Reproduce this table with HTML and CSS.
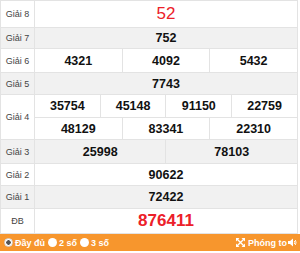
FILE: index.html
```html
<!DOCTYPE html>
<html>
	<head>
		<meta charset="UTF-8">
		<title>Kết quả xổ số</title>
		<link rel="stylesheet" href="styles.css">
	</head>
	<body>
		<div class="kq">
			<table class="bang">
				<colgroup>
					<col class="c-ten">
					<col><col><col><col><col><col><col><col><col><col><col><col>
				</colgroup>
				<tr class="g8">
					<td class="ten">Giải 8</td>
					<td colspan="12" class="so do-nho">52</td>
				</tr>
				<tr class="xam g7">
					<td class="ten">Giải 7</td>
					<td colspan="12" class="so">752</td>
				</tr>
				<tr class="g6">
					<td class="ten">Giải 6</td>
					<td colspan="4" class="so">4321</td>
					<td colspan="4" class="so">4092</td>
					<td colspan="4" class="so">5432</td>
				</tr>
				<tr class="xam">
					<td class="ten">Giải 5</td>
					<td colspan="12" class="so">7743</td>
				</tr>
				<tr class="g4">
					<td class="ten" rowspan="2">Giải 4</td>
					<td colspan="3" class="so">35754</td>
					<td colspan="3" class="so">45148</td>
					<td colspan="3" class="so">91150</td>
					<td colspan="3" class="so">22759</td>
				</tr>
				<tr>
					<td colspan="4" class="so">48129</td>
					<td colspan="4" class="so">83341</td>
					<td colspan="4" class="so">22310</td>
				</tr>
				<tr class="xam g3">
					<td class="ten">Giải 3</td>
					<td colspan="6" class="so">25998</td>
					<td colspan="6" class="so">78103</td>
				</tr>
				<tr>
					<td class="ten">Giải 2</td>
					<td colspan="12" class="so">90622</td>
				</tr>
				<tr class="xam g1">
					<td class="ten">Giải 1</td>
					<td colspan="12" class="so">72422</td>
				</tr>
				<tr class="db">
					<td class="ten">ĐB</td>
					<td colspan="12" class="so do-lon">876411</td>
				</tr>
			</table>

			<div class="thanh">
				<div class="chon">
					<label class="muc"><span class="radio on"></span>Đầy đủ</label>
					<label class="muc"><span class="radio"></span>2 số</label>
					<label class="muc"><span class="radio"></span>3 số</label>
				</div>
				<div class="phai">
					<svg class="ico" width="9" height="9" viewBox="0 0 9 9">
						<path d="M1 1 L8 8 M8 1 L1 8" stroke="#fff" stroke-width="1.4"/>
						<path d="M0 0 H3.5 L0 3.5 Z M9 0 V3.5 L5.5 0 Z M0 9 V5.5 L3.5 9 Z M9 9 H5.5 L9 5.5 Z" fill="#fff"/>
					</svg>
					<span>Phóng to</span>
					<svg class="loa" width="9" height="9" viewBox="0 0 9 9">
						<path d="M0 3 H2 L5 0.5 V8.5 L2 6 H0 Z" fill="#fff"/>
						<path d="M6.3 3 Q7.3 4.5 6.3 6 M7.3 2 Q8.9 4.5 7.3 7" stroke="#fff" stroke-width="0.9" fill="none"/>
					</svg>
				</div>
			</div>
		</div>
	</body>
</html>
```

FILE: styles.css
```css
html,
body {
	margin: 0;
	padding: 0;
	background: #fff;
}

.kq {
	width: 300px;
	font-family: "Liberation Sans", Arial, sans-serif;
}

.bang {
	width: 298px;
	border-collapse: collapse;
	table-layout: fixed;
}

.c-ten {
	width: 34px;
}

.bang td {
	border: 1px solid #e3e3e3;
	height: 21px;
	padding: 0;
	text-align: center;
}

.bang .ten {
	font-size: 9px;
	color: #444;
}

.bang .so {
	font-size: 12.5px;
	font-weight: bold;
	color: #111;
}

.xam td {
	background: #f1f1f1;
}

.g8 td {
	height: 26px;
}

.g7 td {
	height: 20px;
}

.g6 td,
.g3 td {
	height: 23px;
}

.g4 td,
.g1 td {
	height: 22px;
}

.db td {
	height: 24px;
}

.bang .do-nho {
	font-size: 17px;
	font-weight: normal;
	color: #ec2029;
}

.bang .do-lon {
	font-size: 17px;
	color: #ec2029;
}

.thanh {
	display: flex;
	justify-content: space-between;
	align-items: center;
	height: 17px;
	padding: 0 3px 0 4px;
	background: #f7962d;
	color: #fff;
	font-size: 9px;
	font-weight: bold;
}

.chon {
	display: flex;
	gap: 3px;
}

.muc {
	display: flex;
	align-items: center;
	gap: 2px;
}

.radio {
	width: 9px;
	height: 9px;
	border-radius: 50%;
	background: #fff;
	box-sizing: border-box;
}

.radio.on {
	border: 1px solid #d8d8d8;
	background: radial-gradient(circle, #555 0, #555 2px, #fff 2.5px);
}

.phai {
	display: flex;
	align-items: center;
	gap: 3px;
}

.loa {
	margin-left: -2px;
}
```
